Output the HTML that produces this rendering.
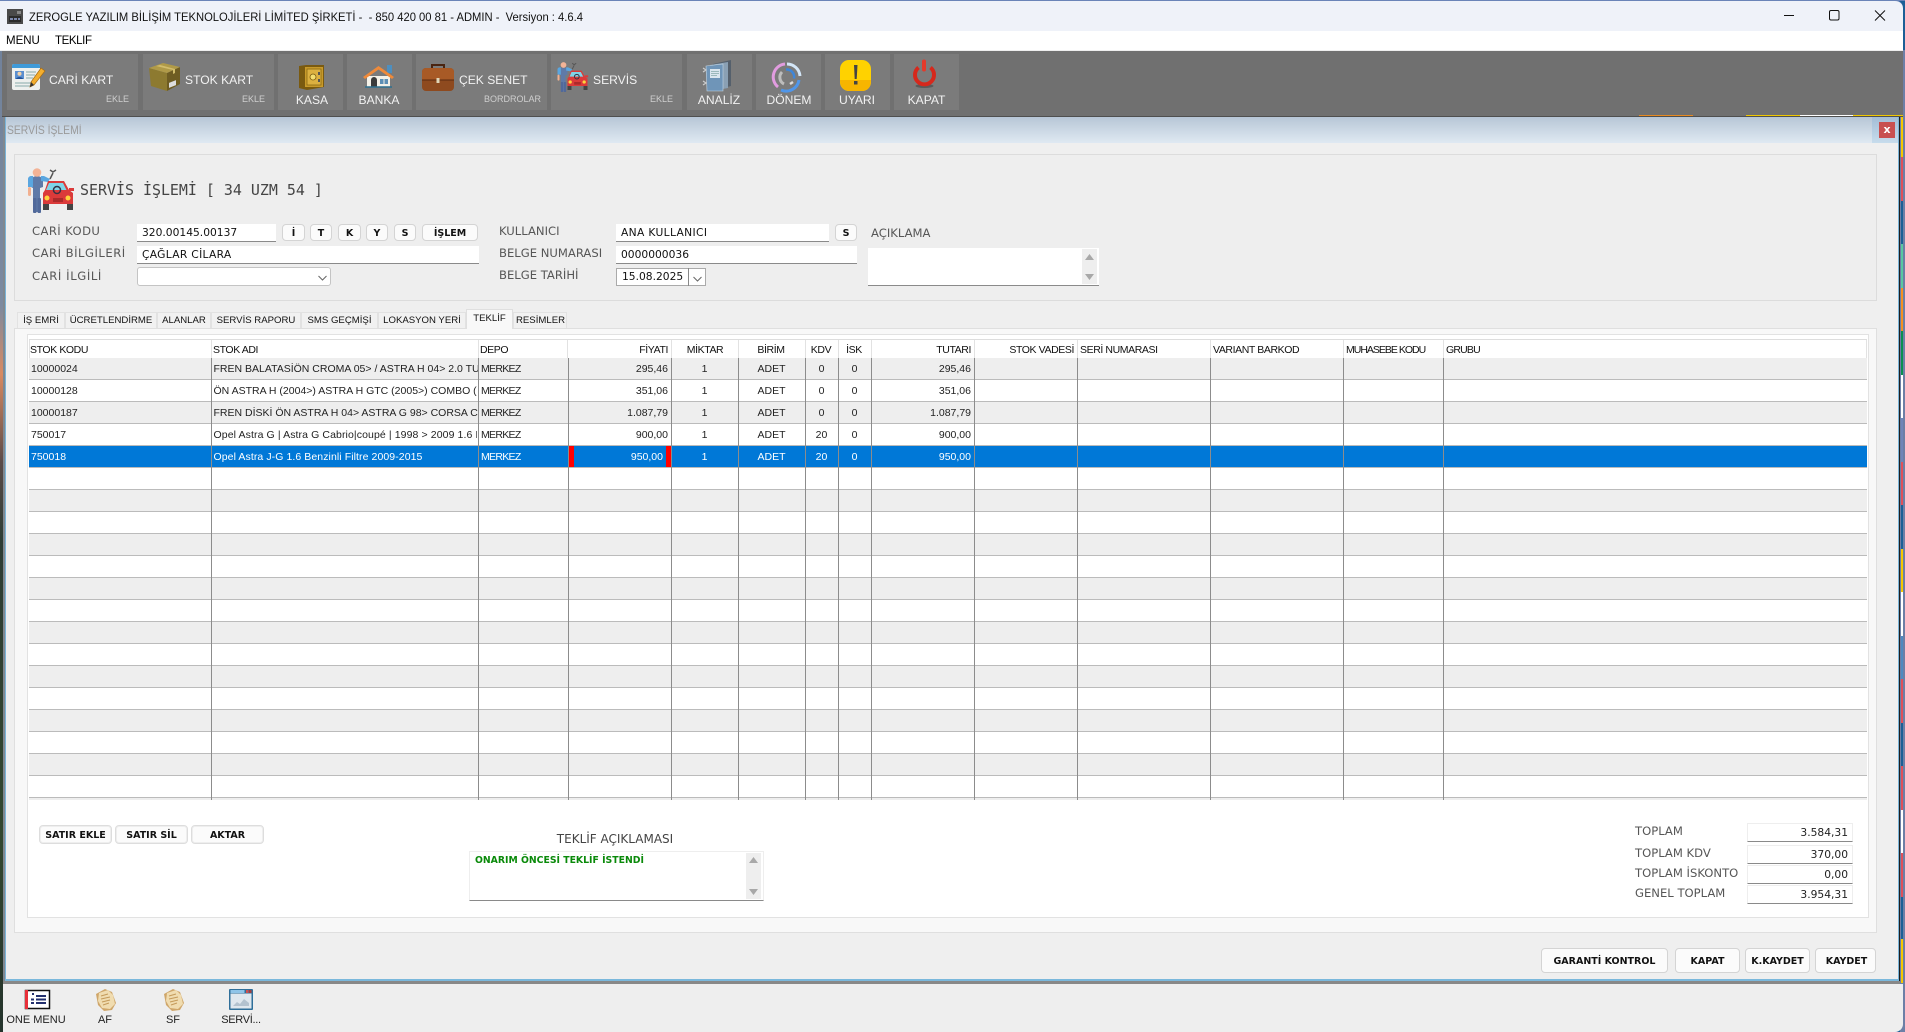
<!DOCTYPE html>
<html lang="tr"><head><meta charset="utf-8"><title>Servis</title>
<style>
html,body{margin:0;padding:0;width:1905px;height:1032px;overflow:hidden;background:#1c5f96}
*{box-sizing:border-box}
.a{position:absolute;white-space:nowrap}
body{font-family:"Liberation Sans",sans-serif;color:#000;position:relative}
.tb{position:absolute;top:54px;height:56px;background:#7b7b7b}
.tl{position:absolute;color:#f2f2f2;font-size:12.1px;line-height:14px;white-space:nowrap}
.ts{position:absolute;color:#cfcfcf;font-size:9px;line-height:12px;white-space:nowrap}
.c{transform:translateX(-50%)}
.lb{position:absolute;font-family:"DejaVu Sans",sans-serif;font-size:11.6px;line-height:14px;color:#565656;white-space:nowrap}
.in{position:absolute;background:#fff;border-bottom:1px solid #8a8a8a;font-family:"DejaVu Sans",sans-serif;font-size:10.7px;line-height:18px;padding-left:5px;color:#111;white-space:nowrap}
.bt{position:absolute;background:#fbfbfb;border:1px solid #d4d4d4;border-radius:4px;font-family:"DejaVu Sans",sans-serif;font-weight:bold;font-size:9.5px;text-align:center;color:#111;white-space:nowrap}
.tab{position:absolute;top:312px;height:16px;background:#f1f1f1;border:1px solid #e2e2e2;border-bottom:0;font-size:9.6px;line-height:16px;text-align:center;color:#111;white-space:nowrap}
.h{position:absolute;top:340px;font-size:10.5px;line-height:20px;letter-spacing:-.4px;color:#111;white-space:nowrap}
.row{position:absolute;left:0;width:1905px;height:22px;font-size:10.5px;line-height:23px;color:#222}
.row span{position:absolute;white-space:nowrap;overflow:hidden;height:22px}
.k{left:31px}.n{left:213.5px;width:264px}.d{left:481px;letter-spacing:-.7px}
.p{right:1237px;text-align:right}.t{right:934px;text-align:right}
.m{left:671px;width:67px;text-align:center}.b{left:738px;width:67px;text-align:center}
.v1{left:805px;width:33px;text-align:center}.v2{left:838px;width:33px;text-align:center}
.sel{color:#fff}
.tot{position:absolute;left:1747px;width:106px;background:#fff;border:1px solid #eee;border-bottom:1px solid #8a8a8a;font-family:"DejaVu Sans",sans-serif;font-size:10.7px;line-height:17px;text-align:right;padding-right:4px;color:#222}
.sq{position:absolute;font-size:11px;line-height:14px;color:#222;white-space:nowrap}
svg{position:absolute;display:block;overflow:visible}
</style></head><body>

<!-- desktop strips -->
<div class="a" style="left:0;top:50px;width:4px;height:982px;background:linear-gradient(#71829b 0,#7c8aa0 26%,#d88a62 33%,#5a4a48 42%,#2d3c34 50%,#33472f 80%,#24332c 100%)"></div>
<div class="a" style="left:1900px;top:50px;width:5px;height:982px;background:#6d7fa6"></div>
<div class="a" style="left:1901px;top:117px;width:2px;height:40px;background:#f5c800"></div>
<div class="a" style="left:1901px;top:157px;width:2px;height:44px;background:#e0505a"></div>
<div class="a" style="left:1901px;top:201px;width:2px;height:43px;background:#1c5f96"></div>
<div class="a" style="left:1901px;top:244px;width:2px;height:44px;background:#5ac8a0"></div>
<div class="a" style="left:1901px;top:288px;width:2px;height:43px;background:#f59020"></div>
<div class="a" style="left:1901px;top:331px;width:2px;height:44px;background:#0a9050"></div>
<div class="a" style="left:1901px;top:375px;width:2px;height:43px;background:#fff"></div>
<div class="a" style="left:1901px;top:418px;width:2px;height:44px;background:#6f85b8"></div>
<div class="a" style="left:1901px;top:462px;width:2px;height:43px;background:#e0505a"></div>
<div class="a" style="left:1901px;top:505px;width:2px;height:44px;background:#1c5f96"></div>
<div class="a" style="left:1901px;top:549px;width:2px;height:43px;background:#f5c800"></div>
<div class="a" style="left:1901px;top:592px;width:2px;height:44px;background:#fff"></div>
<div class="a" style="left:1901px;top:636px;width:2px;height:43px;background:#4f8ac0"></div>
<div class="a" style="left:1901px;top:679px;width:2px;height:44px;background:#e0505a"></div>
<div class="a" style="left:1901px;top:723px;width:2px;height:43px;background:#1c5f96"></div>
<div class="a" style="left:1901px;top:766px;width:2px;height:44px;background:#e0505a"></div>
<div class="a" style="left:1901px;top:810px;width:2px;height:43px;background:#fff"></div>
<div class="a" style="left:1901px;top:853px;width:2px;height:44px;background:#e0505a"></div>
<div class="a" style="left:1901px;top:897px;width:2px;height:42px;background:#1c5f96"></div>
<div class="a" style="left:1901px;top:939px;width:2px;height:44px;background:#f5c800"></div>

<!-- title bar -->
<div class="a" style="left:0;top:0;width:1903px;height:31px;background:#eff2f9;border-top:1px solid #6a84b8;border-top-right-radius:8px"></div>
<div class="a" style="left:0;top:0;width:1905px;height:1px;background:#6a84b8"></div>
<svg style="left:7px;top:9px" width="16" height="15" viewBox="0 0 16 15"><rect width="16" height="15" fill="#4a4a4a"/><rect x="2" y="7" width="12" height="6" fill="#2b2b2b"/><path d="M3 10h3M7 10h3M11 10h2" stroke="#9ad" stroke-width="1.4"/><rect x="10" y="2" width="4" height="3" fill="#888"/></svg>
<div class="a" style="left:29px;top:10px;font-size:12.2px;line-height:14px;color:#111;transform:scaleX(.92);transform-origin:left center">ZEROGLE YAZILIM BİLİŞİM TEKNOLOJİLERİ LİMİTED ŞİRKETİ -&nbsp; - 850 420 00 81 - ADMIN -&nbsp; Versiyon : 4.6.4</div>
<svg style="left:1784px;top:10px" width="101" height="11" viewBox="0 0 101 11" fill="none" stroke="#111" stroke-width="1"><path d="M0 5.5H10"/><rect x="45.5" y=".5" width="9.5" height="9.5" rx="1.5"/><path d="M91 .5l10 10M101 .5l-10 10"/></svg>

<!-- menu -->
<div class="a" style="left:0;top:31px;width:1903px;height:20px;background:#fff;border-bottom:1px solid #eee"></div>
<div class="a" style="left:6px;top:34px;font-size:11.5px;line-height:14px">MENU</div>
<div class="a" style="left:55px;top:34px;font-size:11.5px;line-height:14px;letter-spacing:-.4px">TEKLIF</div>

<!-- toolbar -->
<div class="a" style="left:2px;top:51px;width:1901px;height:66px;background:#707070;border-bottom:1px solid #4f4f4f"></div>
<div class="a" style="left:1639px;top:115px;width:54px;height:1px;background:#e88a20"></div>
<div class="a" style="left:1746px;top:115px;width:54px;height:1px;background:#f0c800"></div>
<div class="a" style="left:1800px;top:115px;width:53px;height:1px;background:#fff"></div>
<div class="a" style="left:1853px;top:115px;width:50px;height:1px;background:#f0c800"></div>

<div class="tb" style="left:7px;width:131px"></div>
<div class="tb" style="left:143px;width:131px"></div>
<div class="tb" style="left:278px;width:65px"></div>
<div class="tb" style="left:347px;width:65px"></div>
<div class="tb" style="left:416px;width:131px"></div>
<div class="tb" style="left:551px;width:131px"></div>
<div class="tb" style="left:687px;width:65px"></div>
<div class="tb" style="left:756px;width:65px"></div>
<div class="tb" style="left:825px;width:65px"></div>
<div class="tb" style="left:894px;width:65px"></div>

<!-- card icon -->
<svg style="left:12px;top:63px" width="34" height="28" viewBox="0 0 34 28"><rect x="0" y="1" width="28" height="26" rx="2" fill="#eef0ee"/><path d="M0 3a2 2 0 0 1 2-2h24a2 2 0 0 1 2 2v2H0z" fill="#3f9ad8"/><rect x="3" y="8" width="9" height="8" fill="#5b8fd0"/><circle cx="7.5" cy="10.8" r="2" fill="#f0d0a8"/><path d="M4 16c.5-2.5 6.500-2.500 7 0z" fill="#1f4f96"/><path d="M14 9h10M14 12h9M14 15h7M3 20h19M3 23h15" stroke="#8aa" stroke-width="1"/><path d="M29 5l4 3-11 14-4 2 1-5z" fill="#f3ae2e" stroke="#a86a10" stroke-width=".7"/><path d="M18 24l1-5 3 3z" fill="#333"/></svg>
<div class="tl" style="left:49px;top:73px">CARİ KART</div><div class="ts" style="right:1776px;top:93px">EKLE</div>

<!-- box -->
<svg style="left:149px;top:63px" width="32" height="28" viewBox="0 0 32 28"><path d="M0 5l18 5v18L2 23z" fill="#8d7a30"/><path d="M18 10l13-6v17l-13 7z" fill="#6e5c22"/><path d="M0 5L14 0l17 4-13 6z" fill="#b09a48"/><path d="M7 3l17 4v4l2-1V6L11 2z" fill="#d2bd6c"/><rect x="20" y="19" width="7" height="5" fill="#ddd" transform="skewY(-22) translate(0 9)"/></svg>
<div class="tl" style="left:185px;top:73px">STOK KART</div><div class="ts" style="right:1640px;top:93px">EKLE</div>

<!-- safe -->
<svg style="left:299px;top:65px" width="25" height="25" viewBox="0 0 25 25"><path d="M0 1l7-1h18v22l-17 3-8-2z" fill="#7a5a10"/><path d="M6 2h18v20H6z" fill="#c89a2a"/><rect x="8" y="4" width="14" height="16" fill="#dcb040" stroke="#8a6a14" stroke-width=".8"/><circle cx="14" cy="12" r="3" fill="#f3dd70" stroke="#7a5a10" stroke-width=".8"/><rect x="19" y="7" width="2" height="3" fill="#555"/><rect x="19" y="14" width="2" height="3" fill="#555"/></svg>
<div class="tl c" style="left:312px;top:93px">KASA</div>

<!-- house -->
<svg style="left:363px;top:65px" width="31" height="23" viewBox="0 0 31 23"><rect x="24" y="0" width="5" height="8" fill="#4d8fc0"/><path d="M4 11h23v11H4z" fill="#f4f1e8"/><path d="M0 12L15.500 1 31 12l-2 2L15.500 4.500 2 14z" fill="#ef8a3a"/><path d="M8 22v-7a3 3 0 0 1 6 0v7z" fill="#3b3b3b"/><rect x="17" y="14" width="3.500" height="5" fill="#5d8fb5"/><rect x="21.500" y="14" width="3.500" height="5" fill="#5d8fb5"/><path d="M2 22h27" stroke="#2d6f90" stroke-width="1.500"/></svg>
<div class="tl c" style="left:379px;top:93px">BANKA</div>

<!-- briefcase -->
<svg style="left:422px;top:63px" width="32" height="28" viewBox="0 0 32 28"><path d="M10 5V2h12v3" fill="none" stroke="#4a2410" stroke-width="2"/><rect x="0" y="5" width="32" height="23" rx="4" fill="#8e4a1f"/><path d="M0 9a4 4 0 0 1 4-4h24a4 4 0 0 1 4 4v8H0z" fill="#a85a26"/><path d="M0 17h32" stroke="#5a2b10" stroke-width="1"/><rect x="14.500" y="15" width="3" height="5" fill="#e0d6b8"/></svg>
<div class="tl" style="left:459px;top:73px">ÇEK SENET</div><div class="ts" style="right:1364px;top:93px">BORDROLAR</div>

<!-- service (toolbar) -->
<svg style="left:557px;top:62px" width="33" height="30" viewBox="0 0 48 45"><use href="#svc"/></svg>
<div class="tl" style="left:593px;top:73px">SERVİS</div><div class="ts" style="right:1232px;top:93px">EKLE</div>

<!-- analiz -->
<svg style="left:703px;top:60px" width="30" height="32" viewBox="0 0 30 32"><path d="M10 4l18-4v26l-16 4z" fill="#55606c"/><path d="M7 5l18-3v26L9 31z" fill="#8aa0b4"/><path d="M3 6l17-2v27L4 31z" fill="#6f95b8"/><path d="M3 6l17-2v27L4 31z" fill="none" stroke="#c4d6e4" stroke-width=".6"/><rect x="7" y="9" width="10" height="9" fill="#dbe6ee"/><path d="M8 11.500h8M8 13.500h8M8 15.500h6" stroke="#8aa" stroke-width=".7"/><path d="M0 8l3 2-3 2M0 21l3 2-3 2" fill="none" stroke="#ccc" stroke-width="1.200"/></svg>
<div class="tl c" style="left:719px;top:93px">ANALİZ</div>

<!-- donem -->
<svg style="left:772px;top:62px" width="30" height="30" viewBox="0 0 30 30" fill="none"><path d="M13 2A13 13 0 0 0 6 25" stroke="#e29ce0" stroke-width="3"/><path d="M15 2a13 13 0 0 1 13 12" stroke="#d3e6f8" stroke-width="3"/><path d="M27 18a13 13 0 0 1-18 10" stroke="#4f96ea" stroke-width="3"/><path d="M10 10a7.500 7.500 0 0 0 2 12" stroke="#bdbdbd" stroke-width="3"/><path d="M14 7.500a7.500 7.500 0 0 1 8 9" stroke="#3f86d8" stroke-width="2.500"/><path d="M21 20l-3 2" stroke="#ddd" stroke-width="2.500"/></svg>
<div class="tl c" style="left:789px;top:93px">DÖNEM</div>

<!-- uyari -->
<svg style="left:840px;top:60px" width="31" height="31" viewBox="0 0 31 31"><rect width="31" height="31" rx="9" fill="#ffd200"/><path d="M0 20c0 8 5 11 9 11h13c5 0 9-3 9-11z" fill="#f7b500"/><path d="M14 5h3.500l-.8 14h-2z" fill="#444"/><rect x="14" y="21" width="3.500" height="3.500" fill="#444"/></svg>
<div class="tl c" style="left:857px;top:93px">UYARI</div>

<!-- kapat -->
<svg style="left:911px;top:60px" width="27" height="29" viewBox="0 0 27 29" fill="none"><ellipse cx="13.500" cy="26" rx="9" ry="2" fill="#5a5a5a"/><path d="M7.500 7.500a9.500 9.500 0 1 0 12 0" stroke="#d6281c" stroke-width="4"/><path d="M13 1.500v8" stroke="#e33a2a" stroke-width="4" stroke-linecap="round"/></svg>
<div class="tl c" style="left:926.500px;top:93px">KAPAT</div>

<!-- window -->
<div class="a" style="left:3px;top:117px;width:1897px;height:867px;background:#efefef;border-left:2px solid #808890;border-right:1px solid #1e1e1e"></div>
<div class="a" style="left:5px;top:117px;width:1894px;height:26px;background:linear-gradient(#b7c6d6,#dfe9f2);border-left:1px solid #fff"></div>
<div class="a" style="left:1872px;top:117px;width:27px;height:26px;background:linear-gradient(#a3bdd6,#c7dcec)"></div>
<div class="a" style="left:5px;top:117px;width:1px;height:862px;background:#7ab4d8"></div>
<div class="a" style="left:1898px;top:117px;width:1px;height:862px;background:#7ab4d8"></div>
<div class="a" style="left:5px;top:979px;width:1894px;height:2px;background:#7ab8dc"></div>
<div class="a" style="left:3px;top:981px;width:1897px;height:3px;background:#888"></div>
<div class="a" style="left:7px;top:124px;font-size:11.500px;line-height:14px;color:#9a9a9a;transform:scaleX(.9);transform-origin:left center">SERVİS İŞLEMİ</div>
<div class="a" style="left:1879px;top:122px;width:16px;height:16px;background:#c85050;color:#fff;font:bold 11px/15px 'DejaVu Sans',sans-serif;text-align:center">x</div>

<!-- top panel -->
<div class="a" style="left:14px;top:154px;width:1863px;height:147px;background:#eee;border:1px solid #dcdcdc"></div>
<svg style="left:28px;top:168px" width="48" height="45" viewBox="0 0 48 45"><defs><g id="svc">
<path d="M3 13c0-3 3-5 6-5s6 2 6 5v6l-3 1v24H5V20l-2-1z" fill="#5f7aa8"/>
<path d="M0 11c0-2 2-3 3-3h2v11H0z" fill="#5aa6e0"/><path d="M13 8h3l6 3-2 3-7-1z" fill="#5aa6e0"/>
<rect x="0" y="19" width="3" height="9" rx="1.500" fill="#f2b090"/>
<rect x="5" y="30" width="3.500" height="15" rx="1" fill="#51699a"/><rect x="9.500" y="30" width="3.500" height="15" rx="1" fill="#51699a"/>
<circle cx="9" cy="4.500" r="4.300" fill="#f3b396"/>
<path d="M22 11l3-6M22 2l3 2 3-2" stroke="#555" stroke-width="1.500" fill="none"/>
<path d="M20 13h16l5 9 4 3v11H15V25l2-3z" fill="#db3a3a"/>
<path d="M21 15h14l3.500 7H18z" fill="#7fd4e8"/>
<circle cx="29" cy="22" r="3.500" fill="none" stroke="#334" stroke-width="1.500"/>
<path d="M41 20h5v3h-5z" fill="#db3a3a"/>
<circle cx="19" cy="30" r="2.500" fill="#ffd23c"/><circle cx="40" cy="30" r="2.500" fill="#ffd23c"/>
<rect x="25" y="30" width="10" height="4" fill="#ab2a2a"/>
<rect x="15" y="36" width="6" height="6" fill="#444"/><rect x="39" y="36" width="6" height="6" fill="#444"/>
</g></defs><use href="#svc"/></svg>
<div class="a" style="left:80px;top:181px;font-family:'DejaVu Sans Mono',monospace;font-size:14.950px;line-height:18px;color:#444">SERVİS İŞLEMİ [ 34 UZM 54 ]</div>

<div class="lb" style="left:32px;top:224px;letter-spacing:.4px">CARİ KODU</div>
<div class="lb" style="left:32px;top:246px;letter-spacing:.5px">CARİ BİLGİLERİ</div>
<div class="lb" style="left:32px;top:269px;letter-spacing:.6px">CARİ İLGİLİ</div>
<div class="in" style="left:137px;top:224px;width:139px;height:18px">320.00145.00137</div>
<div class="bt" style="left:282px;top:224px;width:23px;height:17px;line-height:17px">İ</div>
<div class="bt" style="left:310px;top:224px;width:22px;height:17px;line-height:17px">T</div>
<div class="bt" style="left:338px;top:224px;width:23px;height:17px;line-height:17px">K</div>
<div class="bt" style="left:366px;top:224px;width:22px;height:17px;line-height:17px">Y</div>
<div class="bt" style="left:394px;top:224px;width:22px;height:17px;line-height:17px">S</div>
<div class="bt" style="left:422px;top:224px;width:56px;height:17px;line-height:17px">İŞLEM</div>
<div class="in" style="left:137px;top:246px;width:342px;height:18px;letter-spacing:.3px">ÇAĞLAR CİLARA</div>
<div class="a" style="left:137px;top:267px;width:194px;height:19px;background:#fff;border:1px solid #c4c4c4;border-radius:3px"></div>
<svg style="left:318px;top:275px" width="9" height="6" viewBox="0 0 9 6" fill="none" stroke="#666"><path d="M.5 1l4 4 4-4"/></svg>

<div class="lb" style="left:499px;top:224px">KULLANICI</div>
<div class="lb" style="left:499px;top:246px">BELGE NUMARASI</div>
<div class="lb" style="left:499px;top:268px">BELGE TARİHİ</div>
<div class="in" style="left:616px;top:224px;width:213px;height:18px;letter-spacing:.35px">ANA KULLANICI</div>
<div class="bt" style="left:835px;top:224px;width:22px;height:17px;line-height:17px">S</div>
<div class="in" style="left:616px;top:246px;width:241px;height:18px">0000000036</div>
<div class="a" style="left:616px;top:268px;width:90px;height:18px;background:#fff;border:1px solid #aaa;font:10.700px/16px 'DejaVu Sans',sans-serif;padding-left:5px;color:#111">15.08.2025</div>
<div class="a" style="left:688px;top:268px;width:1px;height:18px;background:#888"></div>
<svg style="left:693px;top:276px" width="9" height="6" viewBox="0 0 9 6" fill="none" stroke="#666"><path d="M.5 1l4 4 4-4"/></svg>
<div class="lb" style="left:871px;top:226px">AÇIKLAMA</div>
<div class="a" style="left:868px;top:248px;width:231px;height:38px;background:#fff;border-bottom:1px solid #8a8a8a"></div>
<div class="a" style="left:1082px;top:249px;width:15px;height:35px;background:#eee"></div>
<svg style="left:1085px;top:254px" width="9" height="26" viewBox="0 0 9 26" fill="#a8a8a8"><path d="M4.500 0L9 6H0zM0 20h9l-4.500 6z"/></svg>

<!-- tabs -->
<div class="a" style="left:14px;top:328px;width:1863px;height:605px;background:#f8f8f8;border:1px solid #dfdfdf"></div>
<div class="tab" style="left:17px;width:48px">İŞ EMRİ</div>
<div class="tab" style="left:65px;width:92px">ÜCRETLENDİRME</div>
<div class="tab" style="left:157px;width:54px">ALANLAR</div>
<div class="tab" style="left:211px;width:90px">SERVİS RAPORU</div>
<div class="tab" style="left:301px;width:77px">SMS GEÇMİŞİ</div>
<div class="tab" style="left:378px;width:88px">LOKASYON YERİ</div>
<div class="tab" style="left:466px;width:47px;top:309px;height:20px;background:#f8f8f8;line-height:17px;border-color:#dfdfdf">TEKLİF</div>
<div class="tab" style="left:513px;width:54px;padding-left:1px">RESİMLER</div>

<div class="a" style="left:27px;top:334px;width:1842px;height:584px;background:#fff;border:1px solid #e2e2e2"></div>

<!-- grid -->
<div class="a" style="left:29px;top:339px;width:1838px;height:1px;background:#ddd"></div>
<div class="a" style="left:29px;top:340px;width:1838px;height:18px;background:#fff"></div>
<svg style="left:0;top:0" width="1905" height="1032"><path d="M29.500 340V358M211.500 340V358M478.500 340V358M567.500 340V358M671.500 340V358M738.500 340V358M805.500 340V358M838.500 340V358M871.500 340V358M974.500 340V358M1077.500 340V358M1210.500 340V358M1343.500 340V358M1443.500 340V358M1866.500 340V358" stroke="#e2e2e2"/></svg>
<div class="a" style="left:29px;top:358px;width:1838px;height:440px;background:repeating-linear-gradient(#eee 0,#eee 21px,#bbb 21px,#bbb 22px,#fff 22px,#fff 43px,#bbb 43px,#bbb 44px)"></div>
<div class="a" style="left:29px;top:798px;width:1838px;height:2px;background:#eee"></div>
<div class="a" style="left:29px;top:446px;width:1838px;height:21px;background:#0078d7"></div>
<svg style="left:0;top:0" width="1905" height="1032"><path d="M211.500 358V800M478.500 358V800M568.500 358V800M671.500 358V800M738.500 358V800M805.500 358V800M838.500 358V800M871.500 358V800M974.500 358V800M1077.500 358V800M1210.500 358V800M1343.500 358V800M1443.500 358V800" stroke="#8c8c8c"/></svg>
<div class="a" style="left:569px;top:446px;width:5px;height:21px;background:#f00"></div>
<div class="a" style="left:666px;top:446px;width:5px;height:21px;background:#f00"></div>

<div class="h" style="left:30px">STOK KODU</div>
<div class="h" style="left:213px">STOK ADI</div>
<div class="h" style="left:480px">DEPO</div>
<div class="h" style="right:1237px">FİYATI</div>
<div class="h c" style="left:705px">MİKTAR</div>
<div class="h c" style="left:771px">BİRİM</div>
<div class="h c" style="left:821px">KDV</div>
<div class="h c" style="left:854px">İSK</div>
<div class="h" style="right:934px">TUTARI</div>
<div class="h" style="right:831px">STOK VADESİ</div>
<div class="h" style="left:1080px">SERİ NUMARASI</div>
<div class="h" style="left:1213px">VARIANT BARKOD</div>
<div class="h" style="left:1346px;letter-spacing:-1px">MUHASEBE KODU</div>
<div class="h" style="left:1446px;letter-spacing:-.8px">GRUBU</div>

<div class="row" style="top:358px"><span class="k">10000024</span><span class="n">FREN BALATASİÖN CROMA 05&gt; / ASTRA H 04&gt; 2.0 TURBO</span><span class="d">MERKEZ</span><span class="p">295,46</span><span class="m">1</span><span class="b">ADET</span><span class="v1">0</span><span class="v2">0</span><span class="t">295,46</span></div>
<div class="row" style="top:380px"><span class="k">10000128</span><span class="n">ÖN ASTRA H (2004&gt;) ASTRA H GTC (2005&gt;) COMBO (</span><span class="d">MERKEZ</span><span class="p">351,06</span><span class="m">1</span><span class="b">ADET</span><span class="v1">0</span><span class="v2">0</span><span class="t">351,06</span></div>
<div class="row" style="top:402px"><span class="k">10000187</span><span class="n">FREN DİSKİ ÖN ASTRA H 04&gt; ASTRA G 98&gt; CORSA C</span><span class="d">MERKEZ</span><span class="p">1.087,79</span><span class="m">1</span><span class="b">ADET</span><span class="v1">0</span><span class="v2">0</span><span class="t">1.087,79</span></div>
<div class="row" style="top:424px"><span class="k">750017</span><span class="n" style="letter-spacing:.1px;width:263px">Opel Astra G | Astra G Cabrio|coupé | 1998 &gt; 2009 1.6 Benzinli</span><span class="d">MERKEZ</span><span class="p">900,00</span><span class="m">1</span><span class="b">ADET</span><span class="v1">20</span><span class="v2">0</span><span class="t">900,00</span></div>
<div class="row sel" style="top:446px"><span class="k">750018</span><span class="n" style="letter-spacing:.08px">Opel Astra J-G 1.6 Benzinli Filtre 2009-2015</span><span class="d">MERKEZ</span><span class="p" style="right:1242px">950,00</span><span class="m">1</span><span class="b">ADET</span><span class="v1">20</span><span class="v2">0</span><span class="t">950,00</span></div>

<!-- lower buttons -->
<div class="bt" style="left:39px;top:825px;width:73px;height:19px;line-height:19px;border-color:#ddd;box-shadow:0 0 0 1px #eee inset">SATIR EKLE</div>
<div class="bt" style="left:115px;top:825px;width:73px;height:19px;line-height:19px;border-color:#ddd;box-shadow:0 0 0 1px #eee inset">SATIR SİL</div>
<div class="bt" style="left:191px;top:825px;width:73px;height:19px;line-height:19px;border-color:#ddd;box-shadow:0 0 0 1px #eee inset">AKTAR</div>

<div class="lb c" style="left:615px;top:832px;color:#444;font-size:12px">TEKLİF AÇIKLAMASI</div>
<div class="a" style="left:469px;top:851px;width:295px;height:50px;background:#fff;border:1px solid #eee;border-bottom:1px solid #8a8a8a"></div>
<div class="a" style="left:746px;top:853px;width:15px;height:46px;background:#eee"></div>
<svg style="left:749px;top:857px" width="9" height="38" viewBox="0 0 9 38" fill="#a8a8a8"><path d="M4.500 0L9 6H0zM0 32h9l-4.500 6z"/></svg>
<div class="a" style="left:475px;top:855px;font:bold 9.300px/12px 'DejaVu Sans',sans-serif;color:#0a8a0a">ONARIM ÖNCESİ TEKLİF İSTENDİ</div>

<div class="lb" style="left:1635px;top:824px">TOPLAM</div>
<div class="lb" style="left:1635px;top:846px">TOPLAM KDV</div>
<div class="lb" style="left:1635px;top:866px">TOPLAM İSKONTO</div>
<div class="lb" style="left:1635px;top:886px">GENEL TOPLAM</div>
<div class="tot" style="top:823px;height:19px">3.584,31</div>
<div class="tot" style="top:845px;height:19px">370,00</div>
<div class="tot" style="top:865px;height:19px">0,00</div>
<div class="tot" style="top:885px;height:19px">3.954,31</div>

<div class="bt" style="left:1541px;top:948px;width:127px;height:25px;line-height:25px">GARANTİ KONTROL</div>
<div class="bt" style="left:1675px;top:948px;width:65px;height:25px;line-height:25px">KAPAT</div>
<div class="bt" style="left:1745px;top:948px;width:65px;height:25px;line-height:25px">K.KAYDET</div>
<div class="bt" style="left:1815px;top:948px;width:61px;height:25px;line-height:25px;padding-left:2px">KAYDET</div>

<!-- bottom bar -->
<div class="a" style="left:3px;top:984px;width:1900px;height:48px;background:#eee;border-bottom-right-radius:8px"></div>
<svg style="left:25px;top:990px" width="25" height="19" viewBox="0 0 25 19"><rect x=".5" y=".5" width="24" height="18" fill="#fff" stroke="#111" stroke-width="1.500"/><rect x="0" y="0" width="3" height="19" fill="#e8303a"/><path d="M7 3h2v2H7zM11 5h10v2H11zM11 8.500h10v2H11zM11 12h10v2H11zM6 8.500h3v2H6zM6 12h3v2H6z" fill="#23306e"/></svg>
<svg style="left:94px;top:988px" width="23" height="23" viewBox="0 0 23 23"><use href="#pap"/></svg>
<svg style="left:162px;top:988px" width="23" height="23" viewBox="0 0 23 23"><defs><g id="pap"><path d="M2 6l9-5 7 3 4 11-4 7-8 1-6-6z" fill="#cfa66a"/><path d="M5 5l9-3 5 5 2 9-5 5-8-1-4-7z" fill="#f0dcb0"/><path d="M7 8l7-2M7 11l9-2M8 14l8-2M9 17l6-2" stroke="#c49a5a" stroke-width="1"/></g></defs><use href="#pap"/></svg>
<svg style="left:229px;top:989px" width="24" height="21" viewBox="0 0 24 21"><rect width="24" height="21" rx="1" fill="#2f6f9a"/><rect x="1.500" y="4.500" width="21" height="15" fill="#dfe7ee"/><rect x="1.500" y="1" width="14" height="3" fill="#8fc4e8"/><rect x="17" y="1" width="2.500" height="3" fill="#d05050"/><rect x="20" y="1" width="2.500" height="3" fill="#a04040"/><path d="M4 17l4-4 3 2 4-5 5 4v3z" fill="#b3c2cf"/></svg>
<div class="sq c" style="left:36px;top:1013px">ONE MENU</div>
<div class="sq c" style="left:105px;top:1013px">AF</div>
<div class="sq c" style="left:173px;top:1013px">SF</div>
<div class="sq c" style="left:241px;top:1013px;letter-spacing:-.3px">SERVİ...</div>

</body></html>
